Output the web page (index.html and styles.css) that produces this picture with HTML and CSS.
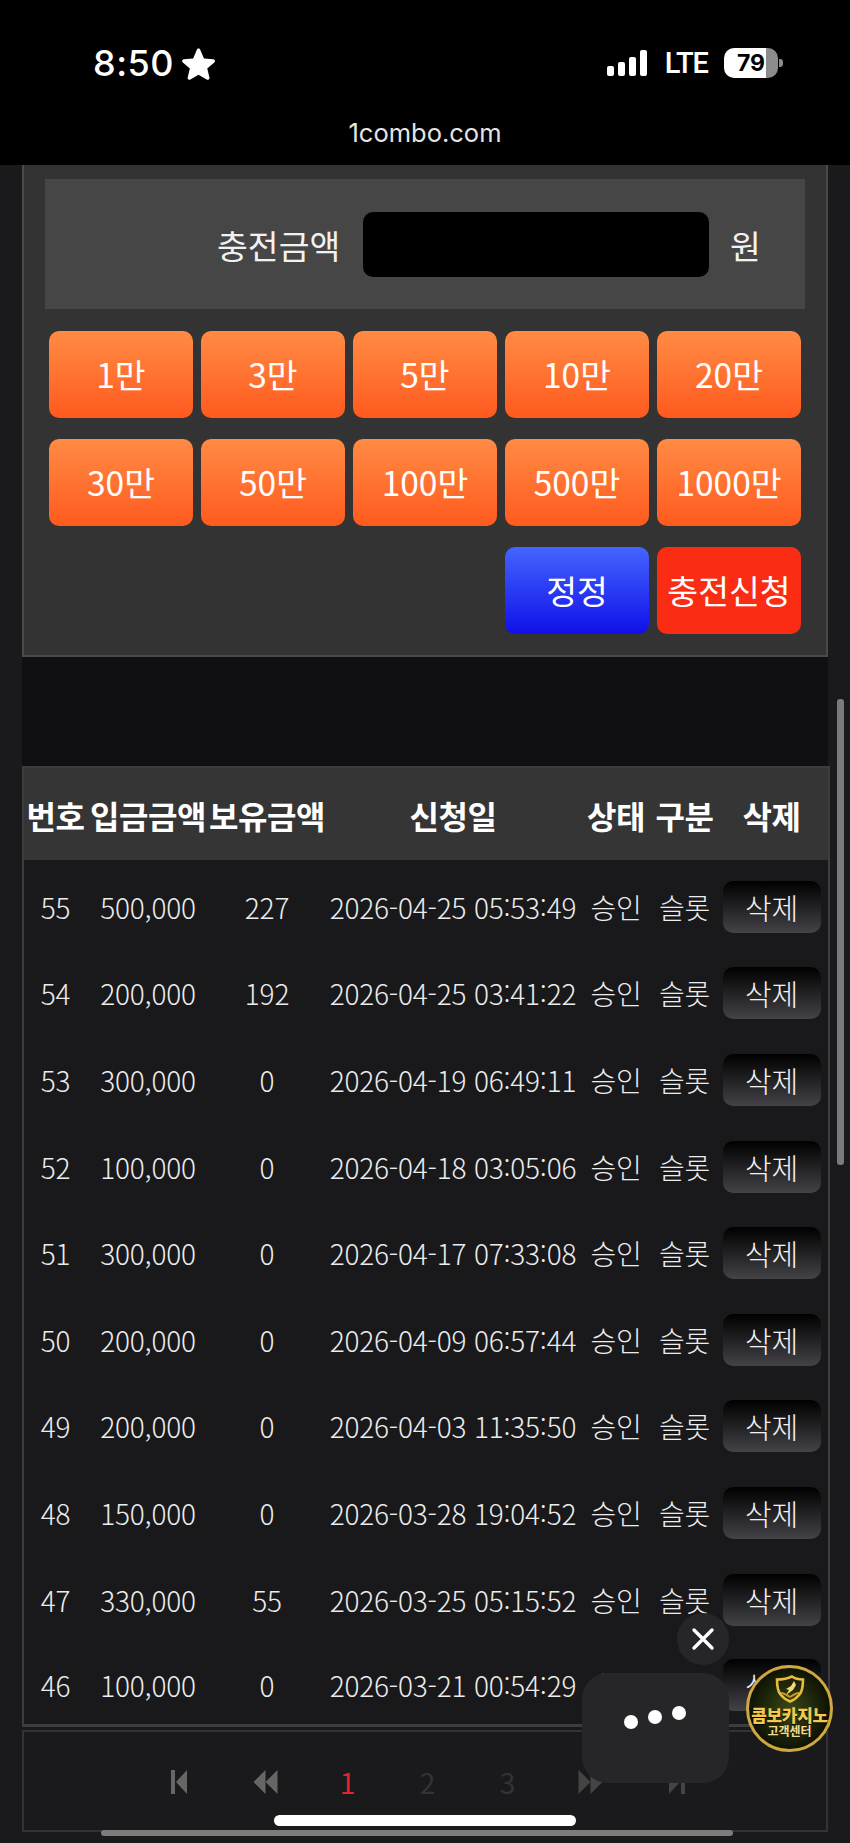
FILE: index.html
```html
<!DOCTYPE html>
<html lang="ko">
<head>
  <meta charset="UTF-8" />
  <title>1combo.com</title>
  <meta name="viewport" content="width=device-width, initial-scale=1.0"/>
  <link rel="stylesheet" href="styles.css">
</head>
<body>
  <div class="phone">
    <!-- status bar -->
    <div class="status-bar">
      <div class="status-row">
        <div class="status-left">
          <span class="clock">8:50</span>
          <svg class="star-icon" viewBox="0 0 32 32"><path fill="#fff" d="M16 1.5c.8 0 1.400.5 1.800 1.300l3.500 8.300 9 .7c1.700.2 2.300 2.100 1 3.200l-6.800 5.800 2.100 8.700c.4 1.600-1.300 2.800-2.700 2l-7.900-4.700-7.800 4.700c-1.400.8-3.100-.4-2.700-2l2.100-8.700L.8 15c-1.300-1.100-.7-3 1-3.200l9-.7 3.500-8.300c.3-.8 1-1.300 1.700-1.300z"/></svg>
        </div>
        <div class="status-right">
          <div class="signal">
            <span class="bar bar-1"></span>
            <span class="bar bar-2"></span>
            <span class="bar bar-3"></span>
            <span class="bar bar-4"></span>
          </div>
          <span class="network">LTE</span>
          <div class="battery">
            <div class="battery-body">79</div>
            <div class="battery-nub"></div>
          </div>
        </div>
      </div>
      <div class="site-url">1combo.com</div>
    </div>

    <!-- charge form -->
    <div class="charge-panel">
      <div class="amount-box">
        <label class="amount-label">충전금액</label>
        <div class="amount-input"></div>
        <span class="amount-unit">원</span>
      </div>
      <div class="button-grid">
        <div class="btn btn-orange">1만</div>
        <div class="btn btn-orange">3만</div>
        <div class="btn btn-orange">5만</div>
        <div class="btn btn-orange">10만</div>
        <div class="btn btn-orange">20만</div>
        <div class="btn btn-orange">30만</div>
        <div class="btn btn-orange">50만</div>
        <div class="btn btn-orange">100만</div>
        <div class="btn btn-orange">500만</div>
        <div class="btn btn-orange">1000만</div>
        <div class="btn btn-blue">정정</div>
        <div class="btn btn-red">충전신청</div>
      </div>
    </div>

    <div class="panel-gap"></div>

    <!-- history -->
    <div class="history">
      <table class="history-table">
        <colgroup>
          <col class="col-no"><col class="col-amount"><col class="col-balance"><col class="col-date"><col class="col-state"><col class="col-type"><col class="col-del">
        </colgroup>
        <thead>
          <tr>
            <th>번호</th><th>입금금액</th><th>보유금액</th><th>신청일</th><th>상태</th><th>구분</th><th>삭제</th>
          </tr>
        </thead>
        <tbody>
          <tr><td>55</td><td>500,000</td><td>227</td><td>2026-04-25 05:53:49</td><td>승인</td><td>슬롯</td><td><span class="del-btn">삭제</span></td></tr>
          <tr><td>54</td><td>200,000</td><td>192</td><td>2026-04-25 03:41:22</td><td>승인</td><td>슬롯</td><td><span class="del-btn">삭제</span></td></tr>
          <tr><td>53</td><td>300,000</td><td>0</td><td>2026-04-19 06:49:11</td><td>승인</td><td>슬롯</td><td><span class="del-btn">삭제</span></td></tr>
          <tr><td>52</td><td>100,000</td><td>0</td><td>2026-04-18 03:05:06</td><td>승인</td><td>슬롯</td><td><span class="del-btn">삭제</span></td></tr>
          <tr><td>51</td><td>300,000</td><td>0</td><td>2026-04-17 07:33:08</td><td>승인</td><td>슬롯</td><td><span class="del-btn">삭제</span></td></tr>
          <tr><td>50</td><td>200,000</td><td>0</td><td>2026-04-09 06:57:44</td><td>승인</td><td>슬롯</td><td><span class="del-btn">삭제</span></td></tr>
          <tr><td>49</td><td>200,000</td><td>0</td><td>2026-04-03 11:35:50</td><td>승인</td><td>슬롯</td><td><span class="del-btn">삭제</span></td></tr>
          <tr><td>48</td><td>150,000</td><td>0</td><td>2026-03-28 19:04:52</td><td>승인</td><td>슬롯</td><td><span class="del-btn">삭제</span></td></tr>
          <tr><td>47</td><td>330,000</td><td>55</td><td>2026-03-25 05:15:52</td><td>승인</td><td>슬롯</td><td><span class="del-btn">삭제</span></td></tr>
          <tr><td>46</td><td>100,000</td><td>0</td><td>2026-03-21 00:54:29</td><td>승인</td><td>슬롯</td><td><span class="del-btn">삭제</span></td></tr>
        </tbody>
      </table>

      <!-- pager -->
      <div class="pager">
        <svg class="pager-icon" viewBox="0 0 16 24"><path d="M0 0h4v24H0zM16 0v24L5 12z"/></svg>
        <svg class="pager-icon" viewBox="0 0 25 24"><path d="M13 0v24L1 12zM25 0v24L13 12z"/></svg>
        <span class="page-num current">1</span>
        <span class="page-num">2</span>
        <span class="page-num">3</span>
        <svg class="pager-icon dim" viewBox="0 0 25 24"><path d="M0 0v24l12-12zM12 0v24l12-12z"/></svg>
        <svg class="pager-icon dim" viewBox="0 0 16 24"><path d="M12 0h4v24h-4zM0 0v24l11-12z"/></svg>
      </div>
    </div>

    <!-- overlays -->
    <div class="scroll-v"></div>
    <div class="scroll-h"></div>
    <div class="home-bar"></div>

    <div class="chat-close">
      <svg viewBox="0 0 24 24"><path d="M3 3l18 18M21 3L3 21" stroke="#fff" stroke-width="3.400" stroke-linecap="round"/></svg>
    </div>
    <div class="chat-bubble">
      <span class="dot dot-1"></span>
      <span class="dot dot-2"></span>
      <span class="dot dot-3"></span>
    </div>
    <div class="support-badge">
      <svg class="shield" viewBox="0 0 30 28">
        <path d="M17 1.500C12 4 7 4.500 2 4.500c0 7 .5 11.500 3.500 15C8 22.500 11 25 15 26.500c4-1.500 7-4 9.500-7 3-3.500 3.500-8 3.500-15-4 0-7.500-.5-11-3z" fill="none" stroke="#e8bd3e" stroke-width="2.600"/>
        <path d="M19 6l-3 5-5 3 3 1-3 5 7-5 3-5z" fill="#f3d877"/>
        <path d="M6 18c3 0 6 2 9 4 3-2 6-4 9-4" fill="none" stroke="#c99a26" stroke-width="1.800"/>
      </svg>
      <div class="badge-name">콤보카지노</div>
      <div class="badge-sub">고객센터</div>
    </div>
  </div>
</body>
</html>
```

FILE: styles.css
```css
* {
  box-sizing: border-box;
}
body {
  margin: 0;
  background: #1a1a1c;
  font-family: "Noto Sans CJK KR", "Liberation Sans", sans-serif;
  color: #fff;
}
.phone {
  position: relative;
  width: 850px;
  height: 1843px;
  overflow: hidden;
  background: #1a1a1c;
}

/* status bar */
.status-bar {
  height: 165px;
  background: #000;
  padding: 43px 67px 0 93px;
}
.status-row {
  display: flex;
  align-items: center;
  justify-content: space-between;
  height: 40px;
}
.status-left {
  display: flex;
  align-items: center;
  gap: 8px;
}
.clock {
  font-family: Inter, sans-serif;
  font-size: 36px;
  font-weight: 500;
  letter-spacing: .5px;
  line-height: 40px;
}
.star-icon {
  width: 33px;
  height: 33px;
}
.status-right {
  display: flex;
  align-items: center;
}
.signal {
  display: flex;
  align-items: flex-end;
  gap: 4px;
  height: 26px;
}
.bar {
  width: 7px;
  background: #fff;
  border-radius: 2px;
}
.bar-1 { height: 10px; }
.bar-2 { height: 14px; }
.bar-3 { height: 19px; }
.bar-4 { height: 26px; }
.network {
  margin-left: 18px;
  font-family: Roboto, sans-serif;
  font-size: 29px;
  font-weight: 500;
  letter-spacing: -1px;
  line-height: 32px;
}
.battery {
  display: flex;
  align-items: center;
  margin-left: 16px;
  gap: 1px;
}
.battery-body {
  width: 54px;
  height: 30px;
  border-radius: 10px;
  background: linear-gradient(to right, #fff 78%, #8c8c8c 78%);
  color: #000;
  font-family: Inter, sans-serif;
  font-size: 23px;
  font-weight: 700;
  line-height: 30px;
  text-align: center;
}
.battery-nub {
  width: 4px;
  height: 8px;
  border-radius: 0 3px 3px 0;
  background: #8c8c8c;
}
.site-url {
  margin: 32px 0 0 -26px;
  font-family: Inter, sans-serif;
  font-size: 25.500px;
  line-height: 36px;
  color: #e4e4e4;
  text-align: center;
}

/* charge form */
.charge-panel {
  width: 806px;
  height: 492px;
  margin-left: 22px;
  padding: 14px 21px 0 21px;
  background: #333334;
  border: solid #4a4a4b;
  border-width: 0 2px 2px 2px;
}
.amount-box {
  display: flex;
  align-items: center;
  height: 130px;
  padding: 0 0 0 172px;
  background: #464646;
}
.amount-label {
  width: 124px;
  font-size: 33.500px;
  white-space: nowrap;
  color: #f2f2f2;
}
.amount-input {
  width: 346px;
  height: 65px;
  margin-left: 22px;
  background: #000;
  border-radius: 10px;
}
.amount-unit {
  margin-left: 21px;
  font-size: 33.500px;
  color: #f2f2f2;
}
.button-grid {
  display: grid;
  grid-template-columns: repeat(5, 144px);
  grid-auto-rows: 87px;
  column-gap: 8px;
  row-gap: 21px;
  margin: 22px 0 0 4px;
}
.btn {
  display: flex;
  align-items: center;
  justify-content: center;
  padding-bottom: 2px;
  border-radius: 10px;
  font-size: 33.500px;
  color: #fff;
  white-space: nowrap;
}
.btn-orange {
  background: linear-gradient(to bottom, #ff8b45, #ff5a1e);
}
.btn-blue {
  grid-column: 4;
  background: linear-gradient(to bottom, #4465ff, #1010e8);
}
.btn-red {
  background: #fb2c14;
}

.panel-gap {
  width: 806px;
  height: 109px;
  margin-left: 22px;
  background: #101012;
}

/* history */
.history {
  width: 806px;
  margin-left: 22px;
}
.history-table {
  width: 806px;
  table-layout: fixed;
  border-collapse: collapse;
  border: solid #3d3d3e;
  border-width: 2px 2px 3px 2px;
}
.col-no { width: 64px; }
.col-amount { width: 122px; }
.col-balance { width: 116px; }
.col-date { width: 256px; }
.col-state { width: 70px; }
.col-type { width: 67px; }
.col-del { width: 111px; }
.history-table th {
  height: 93px;
  padding: 2px 0 0 0;
  background: #353536;
  font-size: 32px;
  font-weight: 700;
  letter-spacing: -.5px;
  white-space: nowrap;
  color: #fff;
}
.history-table th:last-child {
  padding-right: 3px;
}
.history-table td {
  height: 86.600px;
  padding: 7px 0 0 0;
  text-align: center;
  font-size: 28px;
  font-weight: 300;
  letter-spacing: -.2px;
  white-space: nowrap;
  color: #ececec;
  background: #19191b;
}
.history-table td:last-child {
  padding-right: 3px;
}
.del-btn {
  display: inline-block;
  width: 98px;
  height: 52px;
  border-radius: 10px;
  background: linear-gradient(to bottom, #000, #434348);
  font-size: 29px;
  line-height: 52px;
  color: #f2f2f2;
}

/* pager */
.pager {
  display: flex;
  align-items: center;
  justify-content: center;
  height: 102px;
  margin-top: 3px;
  padding: 2px 0 0 5px;
  border: 2px solid #333335;
}
.pager-icon {
  width: 86px;
  height: 24px;
  fill: #666;
}
.pager-icon.dim {
  fill: #444;
}
.page-num {
  width: 80px;
  text-align: center;
  font-size: 28px;
  color: #333335;
}
.page-num.current {
  color: #e8222a;
}

/* scrollbars and home bar */
.scroll-v {
  position: absolute;
  left: 837px;
  top: 699px;
  width: 7px;
  height: 466px;
  border-radius: 3px;
  background: #7c7a80;
}
.scroll-h {
  position: absolute;
  left: 101px;
  top: 1830px;
  width: 632px;
  height: 6px;
  border-radius: 3px;
  background: #7c7c7c;
}
.home-bar {
  position: absolute;
  left: 274px;
  top: 1815px;
  width: 302px;
  height: 11px;
  border-radius: 6px;
  background: #fff;
}

/* chat widget */
.chat-close {
  position: absolute;
  left: 677px;
  top: 1613px;
  display: flex;
  align-items: center;
  justify-content: center;
  width: 52px;
  height: 52px;
  border-radius: 50%;
  background: #262629;
}
.chat-close svg {
  width: 24px;
  height: 24px;
}
.chat-bubble {
  position: absolute;
  left: 582px;
  top: 1673px;
  width: 147px;
  height: 110px;
  border-radius: 26px;
  background: #262629;
}
.dot {
  position: absolute;
  width: 14px;
  height: 14px;
  border-radius: 50%;
  background: #fff;
}
.dot-1 { left: 42px; top: 42px; }
.dot-2 { left: 66px; top: 37px; }
.dot-3 { left: 90px; top: 33px; }

.support-badge {
  position: absolute;
  left: 746px;
  top: 1665px;
  display: flex;
  flex-direction: column;
  align-items: center;
  width: 87px;
  height: 87px;
  padding-top: 7px;
  border-radius: 50%;
  border: 3px solid #cfa93f;
  background: radial-gradient(circle at 50% 50%, #3a4715, #0d1205 72%);
  overflow: hidden;
}
.shield {
  flex: none;
  width: 30px;
  height: 28px;
}
.badge-name {
  margin-top: 3px;
  font-size: 17px;
  font-weight: 900;
  letter-spacing: -.3px;
  line-height: 18px;
  white-space: nowrap;
  color: #f3c94f;
  text-shadow: 0 1px 1px #000;
}
.badge-sub {
  font-size: 12px;
  font-weight: 700;
  line-height: 13px;
  white-space: nowrap;
  color: #f3dc90;
}
```
